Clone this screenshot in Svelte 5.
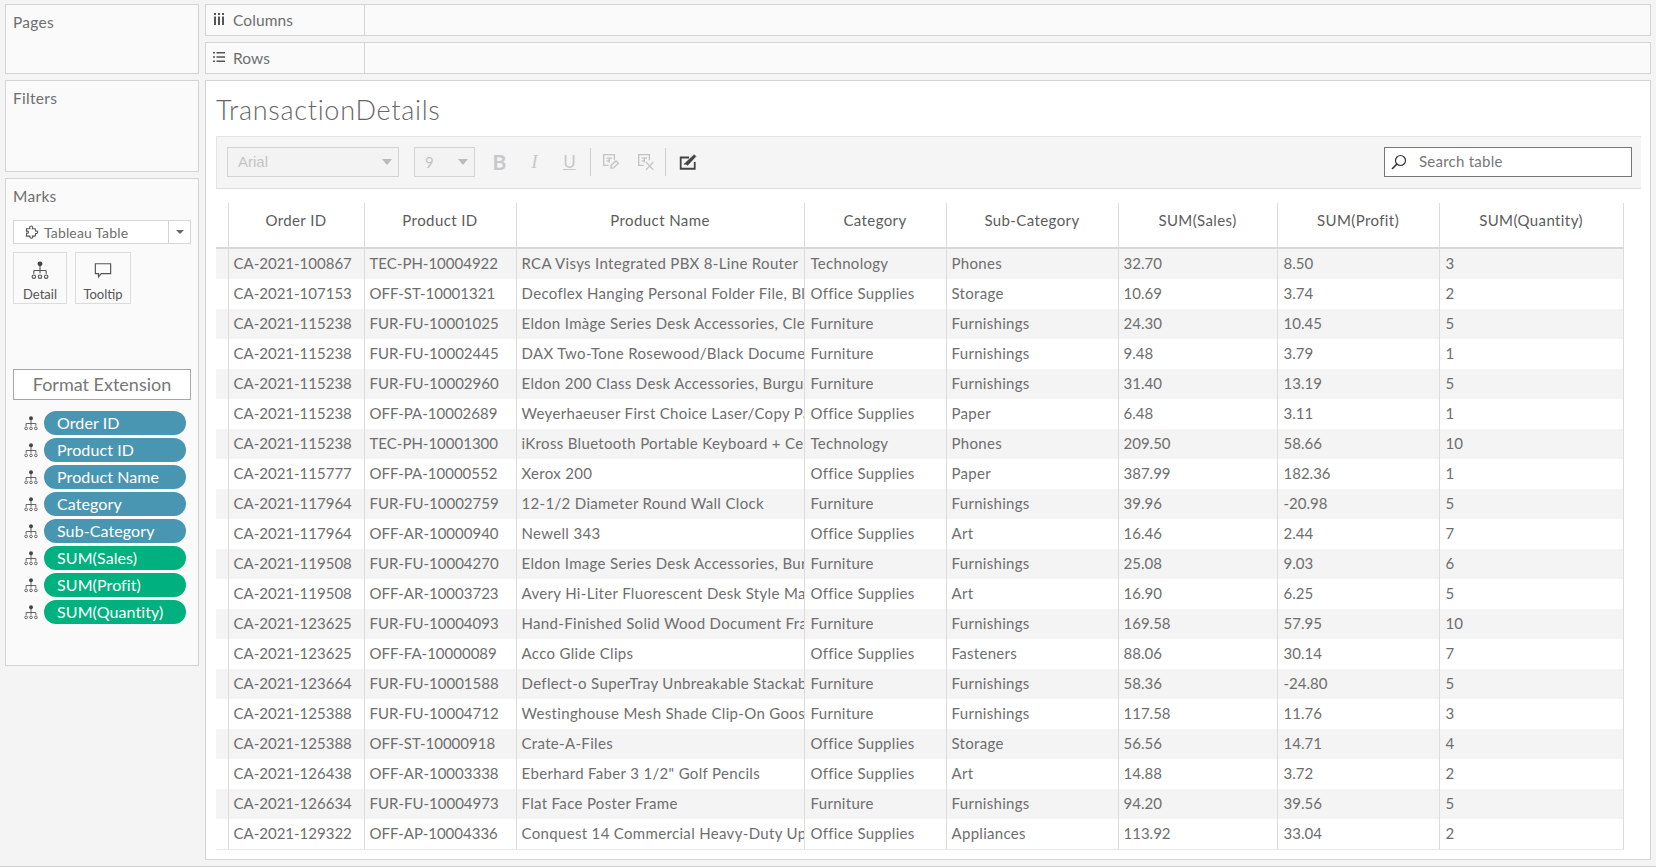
<script>
    const pills = [
        { name: 'Order ID', kind: 'dim' },
        { name: 'Product ID', kind: 'dim' },
        { name: 'Product Name', kind: 'dim' },
        { name: 'Category', kind: 'dim' },
        { name: 'Sub-Category', kind: 'dim' },
        { name: 'SUM(Sales)', kind: 'mea' },
        { name: 'SUM(Profit)', kind: 'mea' },
        { name: 'SUM(Quantity)', kind: 'mea' }
    ];

    const columns = [
        { title: '', width: 12 },
        { title: 'Order ID', width: 136 },
        { title: 'Product ID', width: 152 },
        { title: 'Product Name', width: 288 },
        { title: 'Category', width: 142 },
        { title: 'Sub-Category', width: 172 },
        { title: 'SUM(Sales)', width: 159 },
        { title: 'SUM(Profit)', width: 162 },
        { title: 'SUM(Quantity)', width: 184 }
    ];

    const rows = [
        ['CA-2021-100867', 'TEC-PH-10004922', 'RCA Visys Integrated PBX 8-Line Router', 'Technology', 'Phones', '32.70', '8.50', '3'],
        ['CA-2021-107153', 'OFF-ST-10001321', 'Decoflex Hanging Personal Folder File, Blue', 'Office Supplies', 'Storage', '10.69', '3.74', '2'],
        ['CA-2021-115238', 'FUR-FU-10001025', 'Eldon Imàge Series Desk Accessories, Clear', 'Furniture', 'Furnishings', '24.30', '10.45', '5'],
        ['CA-2021-115238', 'FUR-FU-10002445', 'DAX Two-Tone Rosewood/Black Document Frame', 'Furniture', 'Furnishings', '9.48', '3.79', '1'],
        ['CA-2021-115238', 'FUR-FU-10002960', 'Eldon 200 Class Desk Accessories, Burgundy', 'Furniture', 'Furnishings', '31.40', '13.19', '5'],
        ['CA-2021-115238', 'OFF-PA-10002689', 'Weyerhaeuser First Choice Laser/Copy Paper', 'Office Supplies', 'Paper', '6.48', '3.11', '1'],
        ['CA-2021-115238', 'TEC-PH-10001300', 'iKross Bluetooth Portable Keyboard + Cell Phone', 'Technology', 'Phones', '209.50', '58.66', '10'],
        ['CA-2021-115777', 'OFF-PA-10000552', 'Xerox 200', 'Office Supplies', 'Paper', '387.99', '182.36', '1'],
        ['CA-2021-117964', 'FUR-FU-10002759', '12-1/2 Diameter Round Wall Clock', 'Furniture', 'Furnishings', '39.96', '-20.98', '5'],
        ['CA-2021-117964', 'OFF-AR-10000940', 'Newell 343', 'Office Supplies', 'Art', '16.46', '2.44', '7'],
        ['CA-2021-119508', 'FUR-FU-10004270', 'Eldon Image Series Desk Accessories, Burgundy', 'Furniture', 'Furnishings', '25.08', '9.03', '6'],
        ['CA-2021-119508', 'OFF-AR-10003723', 'Avery Hi-Liter Fluorescent Desk Style Markers', 'Office Supplies', 'Art', '16.90', '6.25', '5'],
        ['CA-2021-123625', 'FUR-FU-10004093', 'Hand-Finished Solid Wood Document Frame', 'Furniture', 'Furnishings', '169.58', '57.95', '10'],
        ['CA-2021-123625', 'OFF-FA-10000089', 'Acco Glide Clips', 'Office Supplies', 'Fasteners', '88.06', '30.14', '7'],
        ['CA-2021-123664', 'FUR-FU-10001588', 'Deflect-o SuperTray Unbreakable Stackable Tray', 'Furniture', 'Furnishings', '58.36', '-24.80', '5'],
        ['CA-2021-125388', 'FUR-FU-10004712', 'Westinghouse Mesh Shade Clip-On Gooseneck Lamp', 'Furniture', 'Furnishings', '117.58', '11.76', '3'],
        ['CA-2021-125388', 'OFF-ST-10000918', 'Crate-A-Files', 'Office Supplies', 'Storage', '56.56', '14.71', '4'],
        ['CA-2021-126438', 'OFF-AR-10003338', 'Eberhard Faber 3 1/2" Golf Pencils', 'Office Supplies', 'Art', '14.88', '3.72', '2'],
        ['CA-2021-126634', 'FUR-FU-10004973', 'Flat Face Poster Frame', 'Furniture', 'Furnishings', '94.20', '39.56', '5'],
        ['CA-2021-129322', 'OFF-AP-10004336', 'Conquest 14 Commercial Heavy-Duty Upright Vacuum', 'Office Supplies', 'Appliances', '113.92', '33.04', '2']
    ];
</script>

{#snippet detailIcon(cls)}
    <svg class={cls} viewBox="0 0 18 20" fill="none" stroke="#555" stroke-width="1.2">
        <circle cx="9" cy="3" r="2.6" fill="#444" stroke="none" />
        <path d="M9 5v8M2.5 10h13M2.5 10v3.500M15.500 10v3.500" />
        <circle cx="2.500" cy="16.500" r="1.800" />
        <circle cx="9" cy="16.500" r="1.800" />
        <circle cx="15.500" cy="16.500" r="1.800" />
    </svg>
{/snippet}

<div class="page">
    <aside class="side">
        <section class="panel pages"><h2>Pages</h2></section>
        <section class="panel filters"><h2>Filters</h2></section>
        <section class="panel marks">
            <h2>Marks</h2>
            <div class="mark-type">
                <div class="mark-type-label">
                    <svg class="puzzle" viewBox="0 0 16 16" fill="none" stroke="#555" stroke-width="1.200">
                        <path d="M5.500 1.500c1.500-1 3 0 2.600 1.600l-.3.900h3l.5 2.600 1-.2c1.500-.2 1.800 2.200.2 2.500l-1.200.1-.5 2.800H8l.2 1c.2 1.500-2.600 1.800-3 .2l.1-1.200H1.500l.3-3.200 1.100.2c1.200-.3 1-2.300-.4-2.300l-1 .1L1.600 4h3.500l-.1-1c0-.6.1-1.100.5-1.500z" />
                    </svg>
                    <span>Tableau Table</span>
                </div>
                <div class="mark-type-arrow"><i class="caret small"></i></div>
            </div>
            <div class="cards">
                <div class="card detail">
                    {@render detailIcon('card-icon')}
                    <span>Detail</span>
                </div>
                <div class="card tooltip">
                    <svg class="card-icon" viewBox="0 0 20 18" fill="none" stroke="#555" stroke-width="1.300">
                        <path d="M1.500 1.500h17v11H8l-3 3.500v-3.500H1.500z" />
                    </svg>
                    <span>Tooltip</span>
                </div>
            </div>
            <div class="extension">Format Extension</div>
            <ul class="pills">
                {#each pills as pill}
                    <li>
                        {@render detailIcon('pill-icon')}
                        <span class="pill {pill.kind}">{pill.name}</span>
                    </li>
                {/each}
            </ul>
        </section>
    </aside>

    <main class="content">
        <div class="panel shelf">
            <div class="shelf-label">
                <svg class="shelf-icon" viewBox="0 0 12 12" fill="#555">
                    <path d="M1 0h2v2H1zM5 0h2v2H5zM9 0h2v2H9zM1 3.500h2V12H1zM5 3.500h2V12H5zM9 3.500h2V12H9z" />
                </svg>
                <span>Columns</span>
            </div>
        </div>
        <div class="panel shelf">
            <div class="shelf-label">
                <svg class="shelf-icon" viewBox="0 0 12 12" fill="#555">
                    <path d="M0 1h2v1.600H0zM0 5.200h2v1.600H0zM0 9.400h2V11H0zM3.500 1H12v1.600H3.500zM3.500 5.200H12v1.600H3.500zM3.500 9.400H12V11H3.500z" />
                </svg>
                <span>Rows</span>
            </div>
        </div>

        <section class="panel sheet">
            <h1>TransactionDetails</h1>

            <div class="toolbar">
                <div class="select font-select"><span>Arial</span><i class="caret"></i></div>
                <div class="select size-select"><span>9</span><i class="caret"></i></div>
                <span class="tool-glyph bold">B</span>
                <span class="tool-glyph italic">I</span>
                <span class="tool-glyph underline">U</span>
                <i class="sep first"></i>
                <svg class="tool-icon" viewBox="0 0 16 16" fill="none" stroke="#c4c4c4" stroke-width="1.200">
                    <path d="M6 11H1.500V1.500h9.500v5" />
                    <path d="M4 4.500h5M4 7h2.500M6.500 4.500v4" />
                    <path d="M8 11l4.500-4 2 2-4.500 4.500H8z" />
                </svg>
                <svg class="tool-icon second" viewBox="0 0 16 16" fill="none" stroke="#c4c4c4" stroke-width="1.200">
                    <path d="M6 11H1.500V1.500h9.500v5" />
                    <path d="M4 4.500h5M4 7h2.500M6.500 4.500v4" />
                    <path d="M8 8l6.500 7M14.500 8L8 15" />
                </svg>
                <i class="sep"></i>
                <svg class="tool-icon check" viewBox="0 0 16 16" fill="none" stroke="#444" stroke-width="1.600">
                    <path d="M14 8v6H1.500V4H9" />
                    <path d="M4.500 10c1.500-.2 2.500 0 3 1L15 3l-1.500-1.500L6 8.500z" fill="#444" stroke-width="0.600" />
                </svg>
                <div class="search">
                    <svg viewBox="0 0 16 16" fill="none" stroke="#333" stroke-width="1.200">
                        <circle cx="9.500" cy="6.500" r="5" />
                        <path d="M6 10L1 15" stroke-width="1.600" />
                    </svg>
                    <span>Search table</span>
                </div>
            </div>

            <table>
                <colgroup>
                    {#each columns as col}
                        <col style="width: {col.width}px" />
                    {/each}
                </colgroup>
                <thead>
                    <tr>
                        {#each columns as col}
                            <th>{col.title}</th>
                        {/each}
                    </tr>
                </thead>
                <tbody>
                    {#each rows as row}
                        <tr>
                            <td></td>
                            {#each row as cell}
                                <td>{cell}</td>
                            {/each}
                        </tr>
                    {/each}
                </tbody>
            </table>
        </section>
    </main>
</div>

<style>
    :global(body) {
        background: #f4f4f4;
        overflow: hidden;
    }

    .page {
        display: grid;
        grid-template-columns: 194px 1446px;
        column-gap: 6px;
        height: 862px;
        padding: 4px 0 0 5px;
        border-bottom: 1px solid #d0d0d0;
        font-family: Lato, "Open Sans", sans-serif;
        font-size: 15px;
        color: #6e6e6e;
    }

    .side,
    .content {
        display: flex;
        flex-direction: column;
        gap: 6px;
        align-items: stretch;
    }

    .panel {
        box-sizing: border-box;
        background: #fafafa;
        border: 1px solid #d4d4d4;
    }

    h2 {
        margin: 0;
        padding: 8px 7px 0;
        font-size: 15.5px;
        font-weight: 400;
        letter-spacing: 0.3px;
        line-height: 18px;
        color: #6e6e6e;
    }

    .pages { height: 70px; }
    .filters { height: 92px; }
    .marks { height: 488px; }

    .marks h2 { margin-bottom: 15px; }

    .mark-type {
        display: flex;
        margin: 0 7px;
        height: 24px;
        border: 1px solid #d4d4d4;
        background: #fff;
        box-sizing: border-box;
        font-size: 14px;
        letter-spacing: 0.15px;
    }

    .mark-type-label {
        flex: 1;
        display: flex;
        align-items: center;
        gap: 4px;
        padding-left: 11px;
    }

    .puzzle { width: 15px; height: 15px; }

    .mark-type-arrow {
        width: 21px;
        display: flex;
        align-items: center;
        justify-content: center;
        border-left: 1px solid #d4d4d4;
    }

    .caret {
        display: block;
        width: 0;
        height: 0;
        border: 5px solid transparent;
        border-top: 6px solid #bbb;
        border-bottom: 0;
    }

    .caret.small {
        border-width: 4px 4px 0;
        border-top-color: #666;
    }

    .cards {
        display: flex;
        gap: 8px;
        margin: 8px 0 0 7px;
    }

    .card {
        box-sizing: border-box;
        height: 52px;
        display: flex;
        flex-direction: column;
        align-items: center;
        gap: 6px;
        padding-top: 8px;
        border: 1px solid #dcdcdc;
        font-size: 13px;
        color: #555;
    }

    .detail { width: 54px; }
    .tooltip { width: 56px; }

    .card-icon { width: 18px; height: 19px; }

    .extension {
        box-sizing: border-box;
        margin: 65px 7px 0;
        height: 31px;
        line-height: 29px;
        text-align: center;
        background: #fff;
        border: 1px solid #a6a6a6;
        font-size: 18px;
        color: #777;
    }

    .pills {
        list-style: none;
        margin: 11px 0 0;
        padding: 0 0 0 18px;
        display: flex;
        flex-direction: column;
        gap: 3px;
    }

    .pills li {
        display: flex;
        align-items: center;
        gap: 6px;
    }

    .pill-icon { width: 14px; height: 15px; }

    .pill {
        width: 142px;
        height: 24px;
        line-height: 24px;
        box-sizing: border-box;
        padding-left: 13px;
        border-radius: 12px;
        color: #fff;
        font-size: 16px;
        letter-spacing: 0.1px;
    }

    .dim { background: #4996b2; }
    .mea { background: #00b180; }

    .shelf { height: 32px; }

    .shelf-label {
        box-sizing: border-box;
        width: 159px;
        height: 30px;
        display: flex;
        align-items: center;
        gap: 8px;
        padding-left: 7px;
        border-right: 1px solid #d4d4d4;
        font-size: 15.5px;
        letter-spacing: 0.1px;
    }

    .shelf-icon { width: 12px; height: 12px; margin-top: -3px; }

    .sheet {
        height: 780px;
        background: #fff;
        padding: 0 0 0 10px;
    }

    h1 {
        margin: 0;
        padding-top: 14px;
        height: 41px;
        box-sizing: content-box;
        font-size: 27px;
        line-height: 30px;
        font-weight: 300;
        letter-spacing: 0.7px;
        color: #666;
    }

    .toolbar {
        box-sizing: border-box;
        width: 1425px;
        height: 53px;
        display: flex;
        align-items: center;
        padding: 0 0 2px 10px;
        background: #f5f5f5;
        border-top: 1px solid #e4e4e4;
        border-bottom: 1px solid #dcdcdc;
        border-left: 1px solid #e4e4e4;
    }

    .select {
        box-sizing: border-box;
        height: 30px;
        display: flex;
        align-items: center;
        justify-content: space-between;
        padding: 0 6px 0 10px;
        border: 1px solid #d4d4d4;
        background: #f3f3f3;
        font-size: 15px;
        color: #c4c4c4;
    }

    .font-select { width: 172px; font-family: "Liberation Sans", Arial, sans-serif; }
    .size-select { width: 61px; margin-left: 15px; }

    .tool-glyph {
        width: 35px;
        text-align: center;
        color: #c8c8c8;
        font-size: 19px;
    }

    .bold { margin-left: 7px; font-weight: 700; font-size: 21px; }
    .italic { font-style: italic; font-family: "Liberation Serif", serif; }
    .underline { text-decoration: underline; font-size: 17px; }

    .sep {
        display: block;
        width: 1px;
        height: 28px;
        background: #cfcfcf;
    }

    .sep.first { margin: 0 11px 0 3px; }

    .tool-icon {
        width: 18px;
        height: 18px;
        margin-right: 17px;
    }

    .tool-icon.second { margin: 0 10px 0 0; }

    .tool-icon.check {
        margin: 0 0 0 13px;
    }

    .search {
        box-sizing: border-box;
        width: 248px;
        height: 30px;
        margin-left: auto;
        margin-right: 9px;
        display: flex;
        align-items: center;
        gap: 12px;
        padding-left: 6px;
        background: #fff;
        border: 1px solid #777;
        color: #777;
        letter-spacing: 0.25px;
    }

    .search span { margin-top: -1px; }
    .search svg { width: 16px; height: 16px; }

    table {
        margin-top: 14px;
        width: 1407px;
        table-layout: fixed;
        border-collapse: collapse;
    }

    th {
        height: 45px;
        padding: 0 0 10px;
        box-sizing: border-box;
        font-weight: 400;
        letter-spacing: 0.4px;
        color: #5c5c5c;
        text-align: center;
        border-right: 1px solid #dcdcdc;
        border-bottom: 2px solid #d8d8d8;
    }

    td {
        height: 30px;
        padding: 0 0 2px 5px;
        box-sizing: border-box;
        white-space: nowrap;
        overflow: hidden;
        text-overflow: clip;
        border-right: 1px solid #dcdcdc;
        line-height: 28px;
    }

    td:nth-child(5) { padding-left: 6px; letter-spacing: 0.3px; }
    td:nth-child(4) { letter-spacing: 0.33px; }
    td:nth-child(6) { letter-spacing: 0.3px; }
    td:nth-child(n+8) { padding-left: 6px; }

    tbody tr:nth-child(odd) { background: #f4f4f4; }
    tbody tr:last-child td { border-bottom: 1px solid #e8e8e8; }
</style>
